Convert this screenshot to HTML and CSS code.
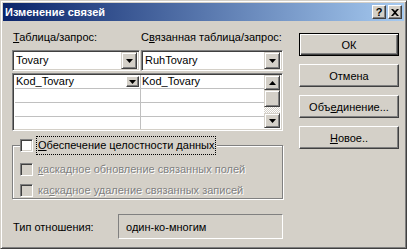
FILE: index.html
```html
<!DOCTYPE html>
<html lang="ru">
<head>
<meta charset="utf-8">
<title>Изменение связей</title>
<link rel="stylesheet" href="styles.css">
</head>
<body>
<div class="window">
  <div class="titlebar">
    <span class="title">Изменение связей</span>
    <div class="tbtns">
      <span class="tbtn help">?</span>
      <span class="tbtn close"><svg width="8" height="7" viewBox="0 0 8 7"><path d="M0 0h2l2 2 2-2h2L5 3.5 8 7H6L4 5 2 7H0l3-3.5z" fill="#000"/></svg></span>
    </div>
  </div>
  <div class="body">
    <div class="main">
      <div class="labels">
        <span class="lab l1"><u>Т</u>аблица/запрос:</span>
        <span class="lab l2">С<u>в</u>язанная таблица/запрос:</span>
      </div>
      <div class="combos">
        <div class="combo c1"><span class="ctext">Tovary</span><span class="dd"><svg width="7" height="4" viewBox="0 0 7 4"><path d="M0 0h7L3.5 4z" fill="#000"/></svg></span></div>
        <div class="combo c2"><span class="ctext">RuhTovary</span><span class="dd"><svg width="7" height="4" viewBox="0 0 7 4"><path d="M0 0h7L3.5 4z" fill="#000"/></svg></span></div>
      </div>
      <div class="grid">
        <div class="cells">
          <div class="cell first"><span>Kod_Tovary</span><span class="mini"><svg width="7" height="4" viewBox="0 0 7 4"><path d="M0 0h7L3.5 4z" fill="#000"/></svg></span></div>
          <div class="cell">Kod_Tovary</div>
          <div class="cell"></div><div class="cell"></div>
          <div class="cell"></div><div class="cell"></div>
          <div class="cell last"></div><div class="cell last"></div>
        </div>
        <div class="scroll">
          <span class="sbtn"><svg width="7" height="4" viewBox="0 0 7 4"><path d="M3.5 0L7 4H0z" fill="#000"/></svg></span>
          <span class="thumb"></span>
          <span class="track"></span>
          <span class="sbtn"><svg width="7" height="4" viewBox="0 0 7 4"><path d="M0 0h7L3.5 4z" fill="#000"/></svg></span>
        </div>
      </div>
      <fieldset class="group">
        <legend class="check-row">
          <span class="box"></span>
          <span class="focus"><u>О</u>беспечение целостности данных</span>
        </legend>
        <div class="check-row disabled first-d">
          <span class="box"></span>
          <span class="dtext"><u>к</u>аскадное обновление связанных полей</span>
        </div>
        <div class="check-row disabled">
          <span class="box"></span>
          <span class="dtext">ка<u>с</u>кадное удаление связанных записей</span>
        </div>
      </fieldset>
      <div class="reltype">
        <span class="rlabel">Тип отношения:</span>
        <span class="rbox">один-ко-многим</span>
      </div>
    </div>
    <div class="buttons">
      <span class="btn default">ОК</span>
      <span class="btn">Отмена</span>
      <span class="btn">Объ<u>е</u>динение...</span>
      <span class="btn"><u>Н</u>овое..</span>
    </div>
  </div>
</div>
</body>
</html>
```
FILE: styles.css
```css
* { box-sizing: border-box; }
html, body { margin: 0; padding: 0; }
body {
  width: 407px;
  height: 249px;
  background: #d4d0c8;
  font-family: "Liberation Sans", Arial, sans-serif;
  font-size: 11px;
  color: #000;
  overflow: hidden;
}
u { text-decoration: underline; text-underline-offset: 1px; }

.window {
  width: 407px;
  height: 249px;
  background: #d4d0c8;
  border: 1px solid;
  border-color: #d4d0c8 #404040 #404040 #d4d0c8;
  box-shadow: inset 1px 1px 0 #fff, inset -1px -1px 0 #808080;
  padding: 2px;
  display: flex;
  flex-direction: column;
}

.titlebar {
  height: 18px;
  background: linear-gradient(to right, #0a246a, #a6caf0);
  display: flex;
  align-items: center;
  justify-content: space-between;
  padding-left: 2px;
  padding-right: 2px;
}
.title {
  color: #fff;
  font-weight: bold;
  font-size: 11px;
  line-height: 13px;
}
.tbtns { display: flex; gap: 2px; }
.tbtn {
  width: 14px;
  height: 14px;
  background: #d4d0c8;
  border: 1px solid;
  border-color: #fff #404040 #404040 #fff;
  box-shadow: inset -1px -1px 0 #808080, inset 1px 1px 0 #d4d0c8;
  display: flex;
  align-items: center;
  justify-content: center;
}
.help {
  font-weight: bold;
  font-size: 11px;
  line-height: 11px;
}

.body {
  display: flex;
  padding-left: 9px;
}
.main {
  width: 272px;
  display: flex;
  flex-direction: column;
}
.labels {
  display: flex;
  margin-top: 10px;
  height: 13px;
  line-height: 13px;
}
.l1 { width: 129px; padding-left: 1px; }

.combos {
  display: flex;
  gap: 1px;
  margin-top: 6px;
}
.combo {
  height: 21px;
  background: #fff;
  border: 1px solid;
  border-color: #808080 #fff #fff #808080;
  box-shadow: inset 1px 1px 0 #404040, inset -1px -1px 0 #d4d0c8;
  display: flex;
  align-items: center;
  padding: 2px;
}
.c1 { width: 128px; }
.c2 { width: 142px; }
.ctext { flex: 1; padding-left: 1px; line-height: 13px; }
.dd {
  width: 16px;
  height: 17px;
  background: #d4d0c8;
  border: 1px solid;
  border-color: #d4d0c8 #404040 #404040 #d4d0c8;
  box-shadow: inset 1px 1px 0 #fff, inset -1px -1px 0 #808080;
  display: flex;
  align-items: center;
  justify-content: center;
}

.grid {
  margin-top: 2px;
  width: 271px;
  height: 58px;
  background: #fff;
  border: 1px solid;
  border-color: #808080 #fff #fff #808080;
  box-shadow: inset 1px 1px 0 #404040, inset -1px -1px 0 #d4d0c8;
  padding: 1px 2px 2px 1px;
  display: flex;
}
.cells {
  flex: 1;
  display: grid;
  grid-template-columns: 126px 1fr;
  grid-template-rows: 14px 14px 14px 12px;
  padding-left: 1px;
}
.cell {
  border-bottom: 1px solid #c0c0c0;
  line-height: 13px;
  padding-left: 1px;
  white-space: nowrap;
}
.cell:nth-child(odd) { border-right: 1px solid #c0c0c0; }
.cell.last { border-bottom: 0; }
.cell.first {
  display: flex;
  justify-content: space-between;
  align-items: flex-start;
}
.mini {
  width: 13px;
  height: 11px;
  margin-top: 1px;
  margin-right: 1px;
  background: #d4d0c8;
  border: 1px solid;
  border-color: #fff #404040 #404040 #fff;
  box-shadow: inset -1px -1px 0 #808080;
  display: flex;
  align-items: center;
  justify-content: center;
}
.scroll {
  width: 16px;
  display: flex;
  flex-direction: column;
}
.sbtn, .thumb {
  background: #d4d0c8;
  border: 1px solid;
  border-color: #d4d0c8 #404040 #404040 #d4d0c8;
  box-shadow: inset 1px 1px 0 #fff, inset -1px -1px 0 #808080;
  display: flex;
  align-items: center;
  justify-content: center;
}
.sbtn { height: 15px; }
.thumb { height: 17px; }
.track {
  flex: 1;
  background-color: #d4d0c8;
  background-image: repeating-conic-gradient(#fff 0 25%, #d4d0c8 0 50%);
  background-size: 2px 2px;
}

.group {
  margin: 5px 0 0 0;
  width: 271px;
  height: 63px;
  padding: 0 0 0 7px;
  border: 1px solid #808080;
  box-shadow: inset 1px 1px 0 #fff, 1px 1px 0 #fff;
}
.group legend {
  padding: 0 2px 0 0;
  margin-left: 0;
  background: #d4d0c8;
}
.check-row {
  display: flex;
  align-items: center;
  gap: 4px;
  height: 18px;
}
.group .disabled { margin-top: 3px; }
.group .first-d { margin-top: 6px; }
.box {
  width: 13px;
  height: 13px;
  background: #fff;
  border: 1px solid;
  border-color: #808080 #fff #fff #808080;
  box-shadow: inset 1px 1px 0 #404040, inset -1px -1px 0 #d4d0c8;
}
.disabled .box { background: #d4d0c8; }
.focus {
  outline: 1px dotted #000;
  outline-offset: 0;
  padding: 2px 1px;
  line-height: 13px;
}
.dtext {
  color: #808080;
  text-shadow: 1px 1px 0 #fff;
  padding-left: 1px;
}

.reltype {
  display: flex;
  align-items: center;
  margin-top: 15px;
}
.rlabel { width: 106px; padding-left: 1px; }
.rbox {
  width: 165px;
  height: 25px;
  border: 1px solid;
  border-color: #808080 #fff #fff #808080;
  padding-left: 7px;
  display: flex;
  align-items: center;
}

.buttons {
  margin-left: 15px;
  margin-top: 12px;
  display: flex;
  flex-direction: column;
  gap: 8px;
}
.btn {
  width: 100px;
  height: 23px;
  background: #d4d0c8;
  border: 1px solid;
  border-color: #fff #404040 #404040 #fff;
  box-shadow: inset -1px -1px 0 #808080, inset 1px 1px 0 #d4d0c8;
  display: flex;
  align-items: center;
  justify-content: center;
}
.btn.default {
  border: 1px solid #000;
  box-shadow: inset 1px 1px 0 #fff, inset -1px -1px 0 #404040, inset -2px -2px 0 #808080;
}
```
